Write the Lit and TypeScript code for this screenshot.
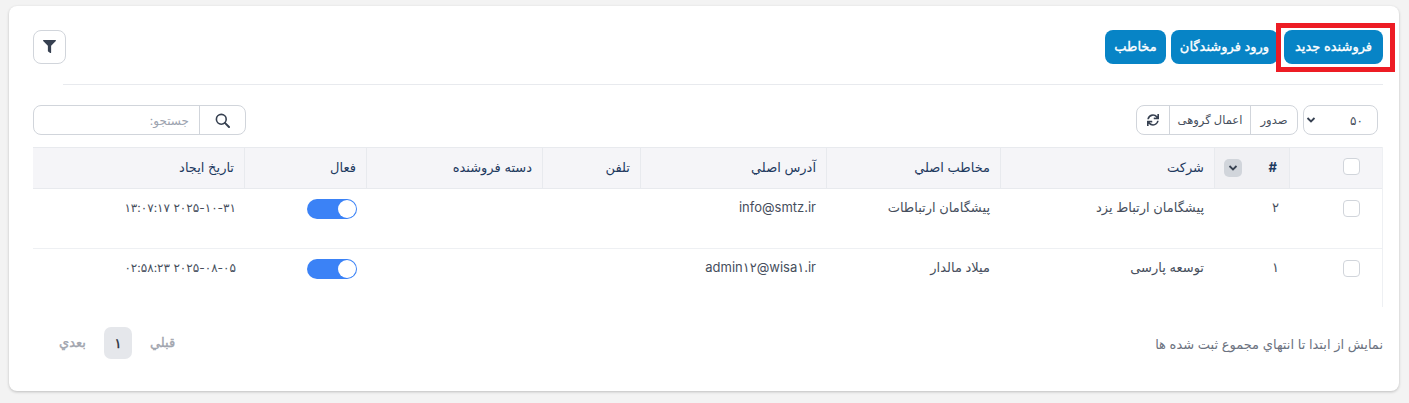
import { LitElement, html, css, svg } from "lit";
import { customElement } from "lit/decorators.js";

const filterIcon = svg`<path d="M487.976 0H24.028C2.71 0-8.047 25.866 7.058 40.971L192 225.941V432c0 7.831 3.821 15.17 10.237 19.662l80 55.98C298.02 518.69 320 507.493 320 487.98V225.941l184.947-184.97C520.021 25.896 509.338 0 487.976 0z"/>`;
const syncIcon = svg`<path d="M440.65 12.57l4 82.77A247.16 247.16 0 0 0 255.83 8C134.73 8 33.91 94.92 12.29 209.82A12 12 0 0 0 24.09 224h49.05a12 12 0 0 0 11.67-9.26 175.91 175.91 0 0 1 317-56.94l-101.46-4.86a12 12 0 0 0-12.57 12v47.41a12 12 0 0 0 12 12H500a12 12 0 0 0 12-12V12a12 12 0 0 0-12-12h-47.37a12 12 0 0 0-11.98 12.57zM255.83 432a175.61 175.61 0 0 1-146-77.8l101.8 4.87a12 12 0 0 0 12.57-12v-47.4a12 12 0 0 0-12-12H12a12 12 0 0 0-12 12V500a12 12 0 0 0 12 12h47.35a12 12 0 0 0 12-12.6l-4.15-82.57A247.17 247.17 0 0 0 255.83 504c121.11 0 221.93-86.92 243.55-201.82a12 12 0 0 0-11.8-14.18h-49.05a12 12 0 0 0-11.67 9.26A175.86 175.86 0 0 1 255.83 432z"/>`;

const rows = [
  { n: "۲", company: "پیشگامان ارتباط یزد", contact: "پیشگامان ارتباطات", mail: "info@smtz.ir", date: "۲۰۲۵-۱۰-۳۱ ۱۳:۰۷:۱۷" },
  { n: "۱", company: "توسعه پارسی", contact: "میلاد مالدار", mail: "admin۱۲@wisa۱.ir", date: "۲۰۲۵-۰۸-۰۵ ۰۲:۵۸:۲۳" },
];

@customElement("app-root")
export class AppRoot extends LitElement {
  static styles = css`
    :host {
      display: block;
      height: 403px;
      box-sizing: border-box;
      padding: 6px 10px 12px 9px;
      background: #f3f3f3;
      font-family: Inter, "DejaVu Sans", sans-serif;
      font-size: 13px;
      color: #464e5c;
    }
    * { box-sizing: border-box; }
    .card {
      direction: rtl;
      height: 385px;
      background: #fff;
      border-radius: 8px;
      padding: 24px 16px 0 24px;
      box-shadow: 0 1px 3px rgba(0,0,0,.22);
    }
    .head { display: flex; justify-content: space-between; height: 34px; }
    .actions { display: flex; gap: 5px; }
    .btn {
      display: flex; align-items: center; justify-content: center;
      height: 34px;
      background: #0784c6;
      color: #fff;
      font-size: 13px;
      -webkit-text-stroke: .35px #fff;
      border-radius: 8px;
      white-space: nowrap;
      padding-bottom: 2px;
    }
    .b1 { width: 99px; margin-left: 1px; }
    .b2 { width: 107px; }
    .b3 { width: 61px; }
    .mark { position: relative; }
    .mark::after {
      content: "";
      position: absolute;
      top: -7px; bottom: -8px; left: -8px; right: -12px;
      border: 5px solid #ed1c24;
      pointer-events: none;
    }
    .filter {
      width: 33px; height: 34px;
      border: 1px solid #d1d5db;
      border-radius: 8px;
      display: flex; align-items: center; justify-content: center;
    }
    .filter svg { width: 13px; height: 13px; fill: #374151; margin-top: -2px; }
    .rule { height: 1px; background: #e8eaee; margin: 20px 0 20px 30px; }
    .tools { display: flex; justify-content: space-between; height: 30px; }
    .tools-r { display: flex; gap: 5px; margin-right: 5px; }
    .select {
      width: 75px; height: 30px;
      border: 1px solid #d1d5db; border-radius: 8px;
      display: flex; align-items: center; justify-content: space-between;
      padding: 0 14px 0 2px;
      font-size: 12px;
    }
    .select svg { width: 10px; height: 10px; }
    .group {
      display: flex; height: 30px;
      border: 1px solid #d1d5db; border-radius: 8px;
      width: 162px;
    }
    .group > div {
      display: flex; align-items: center; justify-content: center;
      font-size: 11.5px; white-space: nowrap;
    }
    .g1 { width: 47px; border-left: 1px solid #d1d5db; }
    .g2 { width: 81px; border-left: 1px solid #d1d5db; }
    .g3 { flex: 1; }
    .g3 svg { width: 12px; height: 12px; fill: #374151; }
    .search {
      display: flex; width: 213px; height: 30px;
      border: 1px solid #d1d5db; border-radius: 8px;
      overflow: hidden;
    }
    .search .sbtn {
      width: 46px; display: flex; align-items: center; justify-content: center;
      border-left: 1px solid #d1d5db;
    }
    .search svg { width: 15px; height: 15px; }
    .search input {
      flex: 1; min-width: 0; border: 0; outline: 0; padding: 0 10px;
      font: inherit; font-size: 12px; background: transparent; direction: rtl;
    }
    .search input::placeholder { color: #9ca3af; }
    table {
      width: 1350px;
      margin-top: 12px;
      border-collapse: separate;
      border-spacing: 0;
      table-layout: fixed;
      border-right: 1px solid #eef0f3;
    }
    th {
      height: 42px;
      background: #f5f5f8;
      border-top: 1px solid #e8eaee;
      border-bottom: 1px solid #e8eaee;
      border-left: 1px solid #e8eaee;
      font-weight: 400;
      text-align: right;
      padding: 0 10px 3px;
      color: #1e3a5f;
      font-size: 13px;
    }
    th:last-child { border-left: 0; }
    th.sorted { background: #f1f1f4; }
    td {
      height: 60px;
      vertical-align: top;
      padding: 10px 10px 0;
      border-bottom: 1px solid #eef0f3;
      text-align: right;
      font-size: 13px;
    }
    tr:last-child td { border-bottom: 0; height: 58px; }
    .w1 { width: 93px; } .w2 { width: 75px; } .w3 { width: 214px; }
    .w4 { width: 174px; } .w5 { width: 186px; } .w6 { width: 98px; }
    .w7 { width: 176px; } .w8 { width: 122px; } .w9 { width: 211px; }
    .check {
      display: block;
      width: 17px; height: 17px;
      margin-right: 12px;
      background: #fff;
      border: 1px solid #d1d5db;
      border-radius: 4px;
    }
    td .check { margin-top: 1px; }
    .hash { font-weight: 700; margin-right: 2px; }
    .sort {
      width: 18px; height: 18px; background: #d1d5db; border-radius: 5px;
      display: flex; align-items: center; justify-content: center;
      margin-bottom: -3px;
    }
    .sort svg { width: 10px; height: 10px; }
    .cellflex { display: flex; align-items: center; justify-content: space-between; }
    .hashcell { padding-left: 9px; }
    .text { display: block; }
    .date { font-size: 12px; margin: 1px -2px 0 0; }
    .switch {
      display: block; position: relative;
      width: 50px; height: 20px; background: #3b82f6; border-radius: 10px;
      margin-right: -1px;
    }
    .switch::after {
      content: ""; position: absolute; top: 1px; right: 1px;
      width: 18px; height: 18px; border-radius: 50%; background: #fff;
    }
    .foot {
      display: flex; justify-content: space-between; align-items: center;
      margin-top: 20px; height: 32px; padding-left: 26px;
    }
    .foot .info { font-size: 13px; color: #6b7280; margin-top: 2px; }
    .pager { display: flex; align-items: center; color: #a1a5ae; font-size: 13px; -webkit-text-stroke: .35px #a1a5ae; }
    .pager span:not(.cur) { margin-bottom: 3px; }
    .pager .cur {
      width: 28px; height: 32px; margin: 0 18px;
      background: #e5e7eb; border-radius: 7px;
      color: #1f2937;
      -webkit-text-stroke: .35px #1f2937;
      display: flex; align-items: center; justify-content: center;
    }
  `;

  render() {
    const chevron = html`<svg viewBox="0 0 10 10"><path d="M1.5 3l3.5 3.5L8.5 3" fill="none" stroke="#374151" stroke-width="1.8"/></svg>`;
    return html`
      <div class="card">
        <div class="head">
          <div class="actions">
            <div class="btn b1 mark">فروشنده جدید</div>
            <div class="btn b2">ورود فروشندگان</div>
            <div class="btn b3">مخاطب</div>
          </div>
          <div class="filter"><svg viewBox="0 0 512 512">${filterIcon}</svg></div>
        </div>
        <div class="rule"></div>
        <div class="tools">
          <div class="tools-r">
            <div class="select"><span>۵۰</span>${chevron}</div>
            <div class="group">
              <div class="g1">صدور</div>
              <div class="g2">اعمال گروهی</div>
              <div class="g3"><svg viewBox="0 0 512 512">${syncIcon}</svg></div>
            </div>
          </div>
          <div class="search">
            <div class="sbtn">
              <svg viewBox="0 0 15 15" fill="none" stroke="#374151">
                <circle cx="6.3" cy="6.3" r="4.9" stroke-width="1.6" />
                <path d="M9.9 9.9L14 14" stroke-width="2" stroke-linecap="round" />
              </svg>
            </div>
            <input placeholder="جستجو:" />
          </div>
        </div>
        <table>
          <colgroup>
            <col class="w1" /><col class="w2" /><col class="w3" /><col class="w4" /><col class="w5" />
            <col class="w6" /><col class="w7" /><col class="w8" /><col class="w9" />
          </colgroup>
          <thead>
            <tr>
              <th><span class="check"></span></th>
              <th class="sorted hashcell">
                <div class="cellflex"><span class="hash">#</span><span class="sort">${chevron}</span></div>
              </th>
              <th>شرکت</th>
              <th>مخاطب اصلي</th>
              <th>آدرس اصلي</th>
              <th>تلفن</th>
              <th>دسته فروشنده</th>
              <th>فعال</th>
              <th>تاریخ ایجاد</th>
            </tr>
          </thead>
          <tbody>
            ${rows.map(
              (r) => html`
                <tr>
                  <td><span class="check"></span></td>
                  <td><span class="text">${r.n}</span></td>
                  <td><span class="text">${r.company}</span></td>
                  <td><span class="text">${r.contact}</span></td>
                  <td><span class="text">${r.mail}</span></td>
                  <td></td>
                  <td></td>
                  <td><span class="switch"></span></td>
                  <td><span class="text date">${r.date}</span></td>
                </tr>
              `
            )}
          </tbody>
        </table>
        <div class="foot">
          <div class="info">نمایش از ابتدا تا انتهاي مجموع ثبت شده ها</div>
          <div class="pager"><span>قبلي</span><span class="cur">۱</span><span>بعدي</span></div>
        </div>
      </div>
    `;
  }
}
